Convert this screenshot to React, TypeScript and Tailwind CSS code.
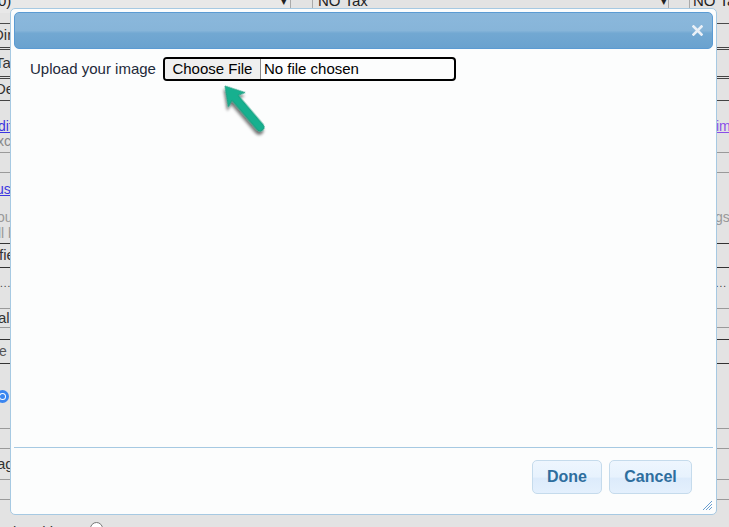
import React from "react";

function CloseX() {
  return (
    <svg width="11" height="11" viewBox="0 0 11 11">
      <path d="M1.5 1.5 L9.5 9.5 M9.5 1.5 L1.5 9.5" stroke="#eaf0f7" strokeWidth="2.6" strokeLinecap="square" />
    </svg>
  );
}

function Arrow() {
  return (
    <svg width="80" height="70" viewBox="0 0 80 70" className="absolute left-[190px] top-[22px]">
      <defs>
        <filter id="sh" x="-30%" y="-30%" width="160%" height="160%">
          <feGaussianBlur in="SourceAlpha" stdDeviation="1.6" />
          <feOffset dx="2" dy="3" result="o" />
          <feComponentTransfer>
            <feFuncA type="linear" slope="0.55" />
          </feComponentTransfer>
          <feMerge>
            <feMergeNode />
            <feMergeNode in="SourceGraphic" />
          </feMerge>
        </filter>
      </defs>
      <g transform="translate(21 15) rotate(49.5)" filter="url(#sh)">
        <path
          d="M0 0 L18 -11 L15.5 -4 L54 -4 Q58 -4 58 0 Q58 4 54 4 L15.5 4 L18 11 Z"
          fill="#19b08f"
          stroke="#14977a"
          strokeWidth="0.8"
          strokeLinejoin="round"
        />
      </g>
    </svg>
  );
}

function Resize() {
  return (
    <svg width="11" height="11" viewBox="0 0 11 11" className="absolute right-[3px] bottom-[3px]">
      <path d="M10 1 L1 10 M10 4 L4 10 M10 7 L7 10" stroke="#6b9fd0" strokeWidth="1" />
    </svg>
  );
}

export default function App() {
  return (
    <div className="relative h-[527px] w-[729px] overflow-hidden bg-[#e3e3e3] font-['Liberation_Sans',Arial,sans-serif] text-[14px] text-[#333]">
      {/* background page */}
      <div className="flex flex-col">
        <div className="h-[24px] border-b border-[#4a4a4a] overflow-hidden">
          <div className="flex h-[24px] -mt-[10px] items-start text-[15px] text-[#222] whitespace-nowrap">
            <div className="w-[290px] shrink-0 flex justify-between bg-[#e8e8e8] pr-[3px]">
              <span className="-ml-[2px]">0)</span>
              <span className="text-[11px] mt-[3px]">▾</span>
            </div>
            <div className="w-[23px] shrink-0 h-[24px] border-l border-r border-[#aaaaaa]" />
            <div className="w-[355px] shrink-0 flex justify-between pl-[5px] pr-[1px]">
              <span>NO Tax</span>
              <span className="text-[11px] mt-[3px]">▾</span>
            </div>
            <div className="w-[22px] shrink-0 h-[24px] border-l border-r border-[#aaaaaa]" />
            <span className="pl-[3px] shrink-0">NO Tax</span>
          </div>
        </div>
        <div className="h-[26px] border-b-[3px] border-double border-[#444] flex items-center">
          <span className="-ml-[7px] text-[15px]">Dir</span>
        </div>
        <div className="h-[29px] border-b-[3px] border-double border-[#444] flex items-center">
          <span className="-ml-[5px] text-[15px]">Tal</span>
        </div>
        <div className="h-[22px] border-b border-[#444] flex items-center">
          <span className="-ml-[5px] text-[15px]">De</span>
        </div>
        <div className="h-[52px] border-b border-[#9a9a9a] flex justify-between pt-[18px]">
          <div className="flex flex-col leading-[15px]">
            <span className="-ml-[2px] text-[#3b36e0] underline">dit</span>
            <span className="-ml-[3px] text-[#888]">xcl</span>
          </div>
          <div className="w-[13px] shrink-0 whitespace-nowrap leading-[15px]">
            <span className="text-[#8a4ee8] underline">image</span>
          </div>
        </div>
        <div className="h-[20px] border-b border-[#9a9a9a]" />
        <div className="h-[71px] border-b border-[#333] flex justify-between pt-[9px]">
          <div className="flex flex-col">
            <span className="-ml-[4px] text-[#3b36e0] underline leading-[15px]">usi</span>
            <span className="-ml-[3px] text-[#999] leading-[16px] mt-[12px]">our</span>
            <span className="-ml-[2px] text-[#999] leading-[16px]">ll b</span>
          </div>
          <div className="w-[14px] shrink-0 whitespace-nowrap mt-[27px] leading-[16px]">
            <span className="text-[#999]">gs</span>
          </div>
        </div>
        <div className="h-[24px] border-b border-[#333] flex items-center">
          <span className="-ml-[1px] text-[15px]">fie</span>
        </div>
        <div className="h-[19px] flex items-end justify-between">
          <span className="text-[10px] leading-[6px] tracking-[1px]">.......</span>
          <span className="text-[10px] leading-[6px] tracking-[1px] pr-[2px]">....</span>
        </div>
        <div className="h-[22px] border-b border-[#9a9a9a]" />
        <div className="h-[19px] border-b border-[#9a9a9a] flex items-center">
          <span className="-ml-[2px] text-[15px]">al</span>
        </div>
        <div className="h-[12px] border-b border-[#333]" />
        <div className="h-[24px] border-b border-[#333] flex items-center">
          <span className="-ml-[1px] text-[14px] text-[#555]">e N</span>
        </div>
        <div className="h-[65px] border-b border-[#9a9a9a] flex items-start pt-[26px]">
          <span className="-ml-[4px] w-[13px] h-[13px] rounded-full border-[3px] border-[#3b86f0] bg-white flex items-center justify-center">
            <span className="w-[5px] h-[5px] rounded-full bg-[#3b86f0]" />
          </span>
        </div>
        <div className="h-[20px] border-b border-[#9a9a9a]" />
        <div className="h-[31px] border-b border-[#9a9a9a] flex items-center">
          <span className="-ml-[3px] text-[15px]">ag</span>
        </div>
        <div className="h-[20px] border-b border-[#9a9a9a]" />
        <div className="h-[28px] flex items-start pt-[21px] text-[15px]">
          <span className="ml-[13px]">l</span>
          <span className="ml-[26px]">ltime</span>
          <span className="ml-[16px] w-[13px] h-[13px] rounded-full border border-[#777] bg-white mt-[1px]" />
        </div>
      </div>

      {/* dialog */}
      <div className="absolute left-[10px] top-[8px] w-[707px] h-[507px] rounded-[5px] border border-[#a6c9e2] bg-[#fcfdfd] p-[3px] flex flex-col">
        <div className="h-[37px] shrink-0 rounded-[5px] border border-[#5b9bd3] bg-[linear-gradient(to_bottom,#8bb8dc_0%,#87b5d9_50%,#72a8d2_58%,#6aa2cf_100%)] flex items-center justify-end pr-[9px]">
          <CloseX />
        </div>
        <div className="relative flex-1 px-[16px] pt-[8px]">
          <div className="flex items-center">
            <span className="text-[15px] text-[#1e2a3a] leading-[24px]">Upload your image</span>
            <div className="ml-[7px] w-[293px] h-[24px] rounded-[4px] border-2 border-black flex items-stretch text-[15px] text-black">
              <div className="w-[96px] bg-[#efefef] border-r border-[#8a8a8a] flex items-center justify-center rounded-l-[2px]">
                Choose File
              </div>
              <div className="flex items-center pl-[3px]">No file chosen</div>
            </div>
          </div>
          <Arrow />
        </div>
        <div className="h-[64px] shrink-0 border-t border-[#a6c9e2] flex justify-end items-start gap-[7px] pt-[12px] pr-[21px]">
          <button className="w-[70px] h-[34px] rounded-[5px] border border-[#c5dbec] bg-[linear-gradient(to_bottom,#eef6fe_0%,#e7f2fd_50%,#dcebfb_54%,#e4f0fd_100%)] text-[16px] font-bold text-[#2e6e9e]">
            Done
          </button>
          <button className="w-[83px] h-[34px] rounded-[5px] border border-[#c5dbec] bg-[linear-gradient(to_bottom,#eef6fe_0%,#e7f2fd_50%,#dcebfb_54%,#e4f0fd_100%)] text-[16px] font-bold text-[#2e6e9e]">
            Cancel
          </button>
        </div>
        <Resize />
      </div>
    </div>
  );
}
